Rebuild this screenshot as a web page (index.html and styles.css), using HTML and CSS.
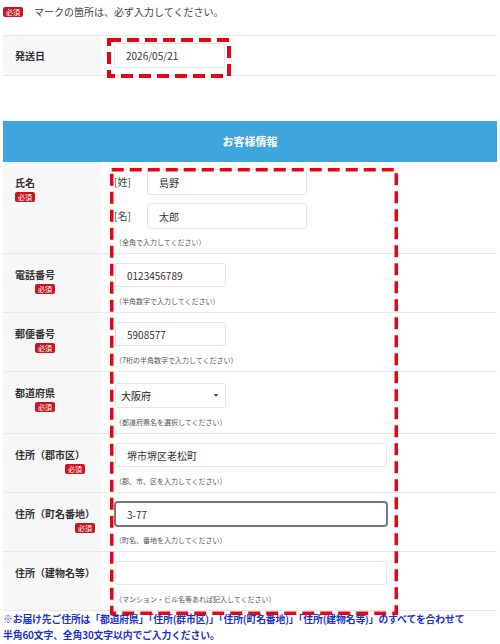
FILE: index.html
```html
<!DOCTYPE html>
<html lang="ja">
<head>
    <link rel="stylesheet" href="styles.css">
    <meta charset="UTF-8">
    <meta name="viewport" content="width=device-width, initial-scale=1.0">
    <title>お客様情報</title>
</head>
<body>
<div class="page">
    <p class="notice"><span class="req">必須</span>マークの箇所は、必ず入力してください。</p>

    <div class="form-table ship">
        <div class="row">
            <div class="th"><span class="label">発送日</span></div>
            <div class="td"><input type="text" class="field w-short" value="2026/05/21"></div>
        </div>
    </div>

    <h2 class="sec-title">お客様情報</h2>

    <div class="form-table">
        <div class="row">
            <div class="th"><span class="label">氏名<span class="req">必須</span></span></div>
            <div class="td td-name">
                <div class="name-line"><span class="name-tag">[姓]</span><input type="text" class="field w-name" value="島野"></div>
                <div class="name-line"><span class="name-tag">[名]</span><input type="text" class="field w-name" value="太郎"></div>
                <p class="note">（全角で入力してください）</p>
            </div>
        </div>
        <div class="row">
            <div class="th"><span class="label">電話番号<span class="req">必須</span></span></div>
            <div class="td">
                <input type="text" class="field w-short" value="0123456789">
                <p class="note">（半角数字で入力してください）</p>
            </div>
        </div>
        <div class="row">
            <div class="th"><span class="label">郵便番号<span class="req">必須</span></span></div>
            <div class="td">
                <input type="text" class="field w-short" value="5908577">
                <p class="note">（7桁の半角数字で入力してください）</p>
            </div>
        </div>
        <div class="row">
            <div class="th"><span class="label">都道府県<span class="req">必須</span></span></div>
            <div class="td">
                <span class="select-wrap">
                    <select class="field w-short sel">
                        <option>大阪府</option>
                    </select>
                </span>
                <p class="note">（都道府県名を選択してください）</p>
            </div>
        </div>
        <div class="row">
            <div class="th"><span class="label">住所（郡市区）<span class="req">必須</span></span></div>
            <div class="td">
                <input type="text" class="field w-long" value="堺市堺区老松町">
                <p class="note">（郡、市、区を入力してください）</p>
            </div>
        </div>
        <div class="row">
            <div class="th"><span class="label">住所（町名番地）<span class="req">必須</span></span></div>
            <div class="td">
                <input type="text" class="field w-long is-focus" value="3-77">
                <p class="note">（町名、番地を入力してください）</p>
            </div>
        </div>
        <div class="row">
            <div class="th"><span class="label">住所（建物名等）</span></div>
            <div class="td">
                <input type="text" class="field w-long" value="">
                <p class="note">（マンション・ビル名等あれば記入してください）</p>
            </div>
        </div>
    </div>

    <p class="caution">※お届け先ご住所は「都道府県」「住所(群市区)」「住所(町名番地)」「住所(建物名等)」のすべてを合わせて<br>半角60文字、全角30文字以内でご入力ください。</p>

    <!-- 入力箇所の目印 -->
    <svg class="mark mark-ship" width="124" height="40">
        <rect x="2" y="2" width="120" height="36" />
    </svg>
    <svg class="mark mark-customer" width="288" height="447">
        <rect x="1.75" y="1.75" width="284.5" height="443.5" />
    </svg>
</div>
</body>
</html>
```

FILE: styles.css
```css
body {
    margin: 0;
    background-color: #fff;
    color: #333;
    font-family: "Noto Sans CJK JP", "Noto Sans", sans-serif;
}

.page {
    position: relative;
    width: 494px;
    padding: 0 3px;
}

p {
    margin: 0;
}

.notice {
    margin-top: 5px;
    margin-bottom: 16px;
    font-size: 10px;
    line-height: 14px;
    color: #444;
    display: flex;
    align-items: center;
}

.notice .req {
    margin: 0 11px 0 0;
}

.req {
    display: inline-block;
    width: 20px;
    height: 10px;
    line-height: 10px;
    background-color: #c9171e;
    color: #fff;
    font-size: 7px;
    font-weight: normal;
    text-align: center;
    border-radius: 2px;
}

/* テーブル */
.form-table .row {
    display: flex;
    border-bottom: 1px solid #e8e8e8;
}

.ship {
    border-top: 1px solid #e8e8e8;
}

.th {
    width: 86px;
    flex: none;
    display: flex;
    align-items: flex-start;
    padding: 14px 0 10px 12px;
    background-color: #f7f7f7;
    white-space: nowrap;
}

.ship .th {
    padding: 12px 0 12px 12px;
    align-items: center;
}

.label {
    display: flex;
    flex-direction: column;
    align-items: flex-end;
    font-size: 10px;
    font-weight: bold;
    line-height: 14px;
    color: #333;
}

.label .req {
    margin-top: 2px;
}

.td {
    flex: 1;
    padding: 9px 14px 5px 14px;
}

.td-name {
    padding-top: 7px;
}

.ship .td {
    padding: 7px 13px;
}

.field {
    box-sizing: border-box;
    height: 24px;
    border: 1px solid #e4e4e4;
    border-radius: 3px;
    background-color: #fff;
    padding: 0 11px;
    font-family: inherit;
    font-size: 10px;
    color: #333;
    display: block;
    outline: none;
}

.ship .field {
    height: 25px;
}

.w-short {
    width: 111px;
}

.w-long {
    width: 272px;
}

.w-name {
    width: 160px;
    height: 26px;
}

.is-focus {
    border-color: #777;
    box-shadow: 0 0 0 1px #777;
}

.name-line {
    display: flex;
    align-items: center;
    margin-left: -1px;
}

.name-line + .name-line {
    margin-top: 8px;
}

.name-tag {
    width: 33px;
    font-size: 10px;
    line-height: 14px;
    color: #444;
}

.note {
    margin-top: 8px;
    font-size: 7px;
    line-height: 12px;
    color: #555;
}

.td-name .note {
    margin-top: 7px;
}

.select-wrap {
    position: relative;
    display: inline-block;
}

.sel {
    appearance: none;
    -webkit-appearance: none;
    height: 25px;
    padding: 0 5px;
    font-size: 10px;
    color: #222;
}

.select-wrap::after {
    content: "";
    position: absolute;
    right: 8px;
    top: 11px;
    border-left: 2px solid transparent;
    border-right: 2px solid transparent;
    border-top: 3px solid #333;
}

.sec-title {
    margin: 45px 0 0 0;
    height: 41px;
    line-height: 41px;
    background-color: #3fa6dd;
    color: #fff;
    font-size: 11px;
    font-weight: bold;
    text-align: center;
}

.caution {
    font-size: 9.8px;
    line-height: 16px;
    font-weight: bold;
    color: #1a33cc;
    white-space: nowrap;
    letter-spacing: -0.1px;
}

/* 赤い点線の目印 */
.mark {
    position: absolute;
    pointer-events: none;
}

.mark rect {
    fill: none;
    stroke: #e30613;
    stroke-width: 3.5;
    stroke-dasharray: 12 6;
}

.mark-ship {
    left: 107px;
    top: 33px;
}

.mark-ship rect {
    stroke-width: 4;
}

.mark-customer {
    left: 110px;
    top: 163px;
}
```
